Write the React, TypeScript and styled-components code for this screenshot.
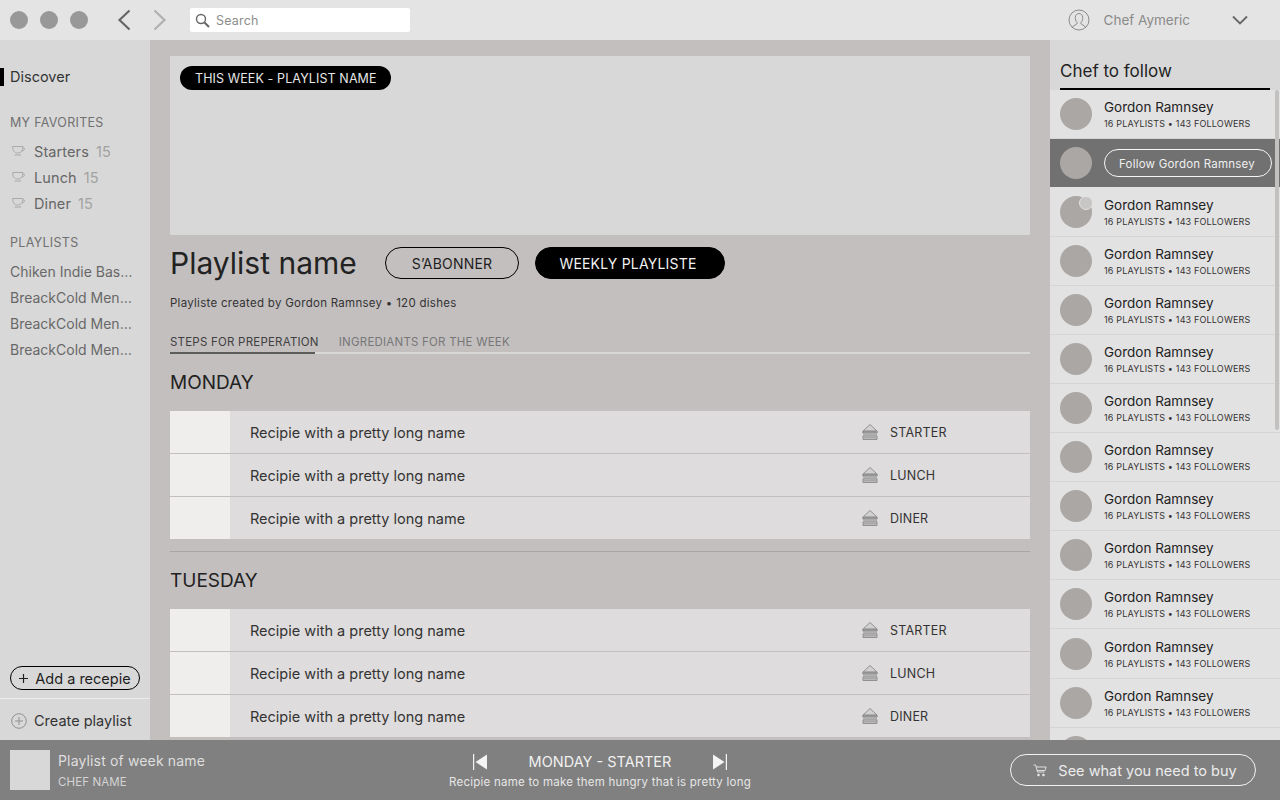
import React from 'react';
import styled, { createGlobalStyle } from 'styled-components';

const GlobalStyle = createGlobalStyle`
    html, body {
        margin:0;
        padding:0;
        height:100%;
        overflow:hidden;
    }
    body {
        font-family:Inter, "Liberation Sans", sans-serif;
        background:#c3bfbf;
        color:#1e1e1e;
    }
    * { box-sizing:border-box; }
`;

const Page = styled.div`
    width:1280px;
    height:800px;
    display:grid;
    grid-template-rows:40px 1fr 60px;
    overflow:hidden;
`;

const TopBar = styled.header`
    background:#e4e4e4;
    display:flex;
    align-items:center;
    padding-left:10px;
`;
const WindowDots = styled.div`
    display:flex;
    gap:12px;
`;
const Dot = styled.span`
    width:18px;
    height:18px;
    border-radius:50%;
    background:#989898;
`;
const NavArrows = styled.div`
    display:flex;
    gap:22px;
    margin-left:29px;
    width:50px;
`;
const SearchBox = styled.div`
    margin-left:23px;
    width:220px;
    height:24px;
    background:#fff;
    border-radius:2px;
    display:flex;
    align-items:center;
    padding-left:5px;
    gap:6px;
    font-size:12.5px;
    letter-spacing:.2px;
    color:#8d8d8d;
`;
const UserBox = styled.div`
    margin-left:auto;
    margin-right:32px;
    display:flex;
    align-items:center;
    font-size:13.5px;
    color:#8a8a8a;
    gap:14px;
    & > svg:last-child { margin-left:28px; }
`;

const Body = styled.div`
    display:grid;
    grid-template-columns:150px 900px 230px;
    min-height:0;
`;

const LeftBar = styled.nav`
    background:#d8d8d8;
    display:flex;
    flex-direction:column;
    min-height:0;
`;
const DiscoverItem = styled.div`
    margin-top:28px;
    height:18px;
    border-left:4px solid #000;
    padding-left:6px;
    font-size:14.5px;
    line-height:18px;
    color:#333;
`;
const SideHeading = styled.div<{ $top: number }>`
    margin:${p => p.$top}px 0 6px 10px;
    font-size:12.5px;
    line-height:18px;
    letter-spacing:.3px;
    color:#707070;
`;
const FavRow = styled.div`
    height:26px;
    display:flex;
    align-items:center;
    padding-left:12px;
    font-size:14.5px;
    letter-spacing:.1px;
    color:#666;
    gap:8px;
`;
const FavCount = styled.span`
    color:#a2a2a2;
    margin-left:-1px;
`;
const PlaylistRow = styled.div`
    height:26px;
    line-height:28px;
    padding:0 15px 0 10px;
    font-size:14px;
    color:#686868;
    white-space:nowrap;
    overflow:hidden;
    text-overflow:ellipsis;
`;
const AddButton = styled.button`
    margin:auto 0 8px 10px;
    width:130px;
    height:24px;
    border:1px solid #000;
    border-radius:12px;
    background:none;
    font:inherit;
    font-size:14.5px;
    color:#1e1e1e;
    display:flex;
    align-items:center;
    justify-content:center;
    gap:7px;
    padding:0;
    white-space:nowrap;
`;
const CreateRow = styled.div`
    height:42px;
    border-top:1px solid #ececec;
    display:flex;
    align-items:center;
    padding:2px 0 0 11px;
    gap:7px;
    font-size:14.5px;
    color:#333;
`;

const Main = styled.main`
    padding:16px 20px 0;
    overflow:hidden;
    min-height:0;
`;
const Hero = styled.section`
    height:179px;
    background:#d8d8d8;
    padding:10px;
`;
const WeekBadge = styled.span`
    display:inline-block;
    height:24px;
    line-height:26px;
    padding:0 14px 0 15px;
    border-radius:12px;
    background:#000;
    color:#e6e6e6;
    font-size:12.5px;
    letter-spacing:.11px;
`;
const TitleRow = styled.div`
    margin-top:12px;
    display:flex;
    align-items:center;
    height:32px;
`;
const PlaylistTitle = styled.h1`
    margin:0 29px 0 0;
    font-size:30px;
    width:186px;
    white-space:nowrap;
    font-weight:400;
    color:#222;
`;
const PillButton = styled.button<{ $dark?: boolean }>`
    height:32px;
    border-radius:16px;
    border:1px solid #000;
    background:${p => (p.$dark ? '#000' : 'transparent')};
    color:${p => (p.$dark ? '#f2f2f2' : '#1e1e1e')};
    width:${p => (p.$dark ? '190px' : '134px')};
    margin-right:16px;
    font:inherit;
    font-size:14px;
    letter-spacing:.2px;
    padding:0 ${p => (p.$dark ? '4px' : '0')} 0 0;
`;
const Credit = styled.div`
    margin-top:17px;
    font-size:11.5px;
    line-height:14px;
    letter-spacing:.28px;
    color:#333;
`;
const Tabs = styled.div`
    margin-top:25px;
    height:19px;
    display:flex;
    gap:20px;
    border-bottom:2px solid #d8d8d8;
    font-size:11.5px;
    line-height:14px;
    letter-spacing:.22px;
    position:relative;
`;
const Tab = styled.span<{ $active?: boolean }>`
    color:${p => (p.$active ? '#404040' : '#777')};
    ${p => p.$active && `
        &::after {
            content:'';
            position:absolute;
            left:0;
            bottom:-2px;
            width:145px;
            height:2px;
            background:#5c5c5c;
        }
    `}
`;
const DayTitle = styled.h2`
    margin:17px 0 17px;
    font-size:19px;
    line-height:23px;
    font-weight:400;
    color:#222;
`;
const RecipeList = styled.div`
    background:#dedcdc;
`;
const RecipeRow = styled.div`
    height:43px;
    display:flex;
    align-items:center;
    border-bottom:1px solid #c3bfbf;
    &:last-child { border-bottom:0; height:42px; }
`;
const RecipeThumb = styled.div`
    width:60px;
    align-self:stretch;
    background:#efeeec;
`;
const RecipeName = styled.div`
    margin-left:20px;
    flex:1;
    font-size:14.5px;
    color:#333;
`;
const MealTag = styled.div`
    width:168px;
    display:flex;
    align-items:center;
    gap:12px;
    font-size:12.5px;
    letter-spacing:.2px;
    color:#333;
`;
const DayDivider = styled.hr`
    margin:12px 0 0;
    border:0;
    border-top:1px solid #a9a5a5;
`;

const RightBar = styled.aside`
    background:#d8d8d8;
    display:flex;
    flex-direction:column;
    min-height:0;
    position:relative;
`;
const FollowTitle = styled.h3`
    margin:0 10px;
    height:50px;
    padding-top:20px;
    border-bottom:2px solid #000;
    font-size:17px;
    line-height:22px;
    font-weight:400;
    color:#222;
`;
const ChefList = styled.div`
    flex:1;
    background:#e3e2e2;
    overflow:hidden;
`;
const ChefRow = styled.div<{ $hover?: boolean; $spaced?: boolean }>`
    height:${p => (p.$hover ? '48px' : '49px')};
    margin-bottom:${p => (p.$spaced ? '1px' : '0')};
    display:flex;
    align-items:center;
    gap:12px;
    padding-left:10px;
    border-bottom:${p => (p.$hover ? '0' : '1px solid #d6d4d4')};
    background:${p => (p.$hover ? '#717171' : 'transparent')};
`;
const Avatar = styled.div<{ $badge?: boolean }>`
    width:32px;
    height:32px;
    border-radius:50%;
    background:#aaa7a5;
    flex:none;
    position:relative;
    ${p => p.$badge && `
        &::after {
            content:'';
            position:absolute;
            top:0;
            right:-1px;
            width:12px;
            height:12px;
            border-radius:50%;
            background:#c8c6c5;
            border:1px solid #e3e2e2;
        }
    `}
`;
const ChefName = styled.div`
    font-size:13.5px;
    line-height:19px;
    color:#222;
`;
const ChefStats = styled.div`
    font-size:9px;
    line-height:12px;
    margin-top:1px;
    letter-spacing:.17px;
    color:#333;
    white-space:nowrap;
`;
const FollowButton = styled.button`
    width:168px;
    height:28px;
    border:1px solid #f6f6f6;
    border-radius:14px;
    background:none;
    color:#efefef;
    font:inherit;
    font-size:11.5px;
    letter-spacing:.22px;
    padding:2px 2px 0 0;
`;
const ScrollThumb = styled.div`
    position:absolute;
    top:50px;
    right:1px;
    width:4px;
    height:340px;
    background:#c3c0c0;
    border-radius:2px;
`;

const Player = styled.footer`
    background:#808080;
    display:grid;
    grid-template-columns:440px 300px 1fr;
    align-items:center;
    padding:0 24px 0 10px;
    color:#e6e6e6;
`;
const NowPlaying = styled.div`
    display:flex;
    align-items:center;
    gap:8px;
`;
const PlayingThumb = styled.div`
    width:40px;
    height:40px;
    background:#d8d8d8;
`;
const PlayingTitle = styled.div`
    font-size:14px;
    line-height:18px;
    letter-spacing:.15px;
    color:#dedede;
`;
const PlayingChef = styled.div`
    margin-top:5px;
    font-size:11.5px;
    line-height:14px;
    letter-spacing:.1px;
    color:#d4d4d4;
`;
const PlayerCenter = styled.div`
    display:flex;
    flex-direction:column;
    align-items:center;
`;
const StepRow = styled.div`
    display:flex;
    align-items:center;
    justify-content:space-between;
    width:254px;
    font-size:14.5px;
    line-height:20px;
    color:#f0f0f0;
`;
const RecipeLine = styled.div`
    margin-top:3px;
    font-size:11.5px;
    line-height:14px;
    letter-spacing:.24px;
    white-space:nowrap;
    color:#e6e6e6;
`;
const BuyButton = styled.button`
    justify-self:end;
    width:246px;
    height:32px;
    border:1px solid #f2f2f2;
    border-radius:16px;
    background:none;
    color:#ececec;
    font:inherit;
    font-size:14.5px;
    display:flex;
    align-items:center;
    justify-content:center;
    gap:11px;
    padding:0 0 0 4px;
`;

const Chevron = ({ dir, color }: { dir: 'left' | 'right'; color: string }) => (
    <svg width="14" height="22" viewBox="0 0 14 22" fill="none">
        <path d={dir === 'left' ? 'M12.500 1.500 2.500 11l10 9.500' : 'M1.500 1.500l10 9.500-10 9.500'} stroke={color} strokeWidth="2.200" />
    </svg>
);

const SearchIcon = () => (
    <svg width="15" height="15" viewBox="0 0 15 15" fill="none" stroke="#666">
        <circle cx="6" cy="6" r="4.500" strokeWidth="1.400" />
        <path d="M9.500 9.500 14 14" strokeWidth="2" />
    </svg>
);

const UserIcon = () => (
    <svg width="22" height="22" viewBox="0 0 22 22" fill="none" stroke="#808080" strokeWidth=".9">
        <circle cx="11" cy="11" r="10" />
        <path d="M4.500 18.500c.3-2.500 5-2.500 4.800-4.600C7.500 12 7.300 10 7.300 8.500 7.300 6 9 4.500 11 4.500s3.700 1.500 3.700 4c0 1.500-.2 3.500-2 5.400-.2 2.100 4.500 2.100 4.800 4.600" />
    </svg>
);

const CupIcon = () => (
    <svg width="14" height="12" viewBox="0 0 14 12" fill="none" stroke="#a5a5a5" strokeWidth=".9">
        <path d="M.6 1.500h10.400c0 4-1.800 6.500-5.200 6.500S.6 5.500.6 1.500Z" />
        <path d="M10.800 3h1.200c1 0 1 2.500-2.400 3.200M2.500 10h6.600" />
    </svg>
);

const SandwichIcon = () => (
    <svg width="16" height="16" viewBox="0 0 16 16" fill="none" stroke="#8a8a8a" strokeWidth=".9">
        <path d="M8 .5 1 7h14Z" fill="#d2d0d0" />
        <path d="M.8 7.300h14.400v1.700H.8Z" fill="#a3a1a1" />
        <path d="M1 10.200c1.200-.8 1.600.7 2.800 0s1.600.7 2.800 0 1.600.7 2.800 0 1.600.7 2.800 0 1.600.7 2.800 0" />
        <path d="M1 11.800h14v3.700H1Z" fill="#bdbbbb" />
        <path d="M1 13.600h14" stroke="#a3a1a1" />
    </svg>
);

const CartIcon = () => (
    <svg width="14" height="13" viewBox="0 0 14 13" fill="none" stroke="#e8e8e8" strokeWidth=".9">
        <path d="M.5 1h2.200l1.800 7h7M3.200 3h10l-1.200 3.500H4.200" />
        <circle cx="5.500" cy="11" r=".9" fill="#e8e8e8" />
        <circle cx="10.500" cy="11" r=".9" fill="#e8e8e8" />
    </svg>
);

const PlusCircle = () => (
    <svg width="16" height="16" viewBox="0 0 16 16" fill="none" stroke="#909090">
        <circle cx="8" cy="8" r="7.300" />
        <path d="M8 4v8M4 8h8" />
    </svg>
);

const SkipIcon = ({ dir }: { dir: 'prev' | 'next' }) => (
    <svg width="14" height="16" viewBox="0 0 14 16" fill="#f4f4f4">
        {dir === 'prev' ? <path d="M0 0h1.200v16H0ZM14 .5v15L2.500 8Z" /> : <path d="M12.800 0H14v16h-1.200ZM0 .5v15L11.500 8Z" />}
    </svg>
);

const meals = ['STARTER', 'LUNCH', 'DINER'];
const favorites = ['Starters', 'Lunch', 'Diner'];
const playlists = ['Chiken Indie Basque Menu', 'BreackCold Menu Basque', 'BreackCold Menu Basque', 'BreackCold Menu Basque'];
const chefs = Array.from({ length: 14 }, (_, i) => i);

const DayBlock = ({ day, divider }: { day: string; divider?: boolean }) => (
    <>
        <DayTitle>{day}</DayTitle>
        <RecipeList>
            {meals.map(meal => (
                <RecipeRow key={meal}>
                    <RecipeThumb />
                    <RecipeName>Recipie with a pretty long name</RecipeName>
                    <MealTag>
                        <SandwichIcon />
                        {meal}
                    </MealTag>
                </RecipeRow>
            ))}
        </RecipeList>
        {divider && <DayDivider />}
    </>
);

const App = () => {
    return (
        <Page>
            <GlobalStyle />
            <TopBar>
                <WindowDots>
                    <Dot />
                    <Dot />
                    <Dot />
                </WindowDots>
                <NavArrows>
                    <Chevron dir="left" color="#666" />
                    <Chevron dir="right" color="#b0b0b0" />
                </NavArrows>
                <SearchBox>
                    <SearchIcon />
                    Search
                </SearchBox>
                <UserBox>
                    <UserIcon />
                    Chef Aymeric
                    <svg width="16" height="10" viewBox="0 0 16 10" fill="none">
                        <path d="M1 1.500 8 8.500l7-7" stroke="#666" strokeWidth="1.800" />
                    </svg>
                </UserBox>
            </TopBar>
            <Body>
                <LeftBar>
                    <DiscoverItem>Discover</DiscoverItem>
                    <SideHeading $top={28}>MY FAVORITES</SideHeading>
                    <div>
                        {favorites.map(name => (
                            <FavRow key={name}>
                                <CupIcon />
                                {name}
                                <FavCount>15</FavCount>
                            </FavRow>
                        ))}
                    </div>
                    <SideHeading $top={18}>PLAYLISTS</SideHeading>
                    <div>
                        {playlists.map((name, i) => (
                            <PlaylistRow key={i}>{name}</PlaylistRow>
                        ))}
                    </div>
                    <AddButton>
                        <svg width="9" height="9" viewBox="0 0 9 9" stroke="#1e1e1e" strokeWidth="1.200">
                            <path d="M4.500 0v9M0 4.500h9" />
                        </svg>
                        Add a recepie
                    </AddButton>
                    <CreateRow>
                        <PlusCircle />
                        Create playlist
                    </CreateRow>
                </LeftBar>
                <Main>
                    <Hero>
                        <WeekBadge>THIS WEEK - PLAYLIST NAME</WeekBadge>
                    </Hero>
                    <TitleRow>
                        <PlaylistTitle>Playlist name</PlaylistTitle>
                        <PillButton>S’ABONNER</PillButton>
                        <PillButton $dark>WEEKLY PLAYLISTE</PillButton>
                    </TitleRow>
                    <Credit>Playliste created by Gordon Ramnsey • 120 dishes</Credit>
                    <Tabs>
                        <Tab $active>STEPS FOR PREPERATION</Tab>
                        <Tab>INGREDIANTS FOR THE WEEK</Tab>
                    </Tabs>
                    <DayBlock day="MONDAY" divider />
                    <DayBlock day="TUESDAY" />
                </Main>
                <RightBar>
                    <FollowTitle>Chef to follow</FollowTitle>
                    <ChefList>
                        {chefs.map(i => (
                            <ChefRow key={i} $hover={i === 1} $spaced={i === 1 || i === 10}>
                                <Avatar $badge={i === 2} />
                                {i === 1 ? (
                                    <FollowButton>Follow Gordon Ramnsey</FollowButton>
                                ) : (
                                    <div>
                                        <ChefName>Gordon Ramnsey</ChefName>
                                        <ChefStats>16 PLAYLISTS • 143 FOLLOWERS</ChefStats>
                                    </div>
                                )}
                            </ChefRow>
                        ))}
                    </ChefList>
                    <ScrollThumb />
                </RightBar>
            </Body>
            <Player>
                <NowPlaying>
                    <PlayingThumb />
                    <div>
                        <PlayingTitle>Playlist of week name</PlayingTitle>
                        <PlayingChef>CHEF NAME</PlayingChef>
                    </div>
                </NowPlaying>
                <PlayerCenter>
                    <StepRow>
                        <SkipIcon dir="prev" />
                        MONDAY - STARTER
                        <SkipIcon dir="next" />
                    </StepRow>
                    <RecipeLine>Recipie name to make them hungry that is pretty long</RecipeLine>
                </PlayerCenter>
                <BuyButton>
                    <CartIcon />
                    See what you need to buy
                </BuyButton>
            </Player>
        </Page>
    );
};

export default App;
